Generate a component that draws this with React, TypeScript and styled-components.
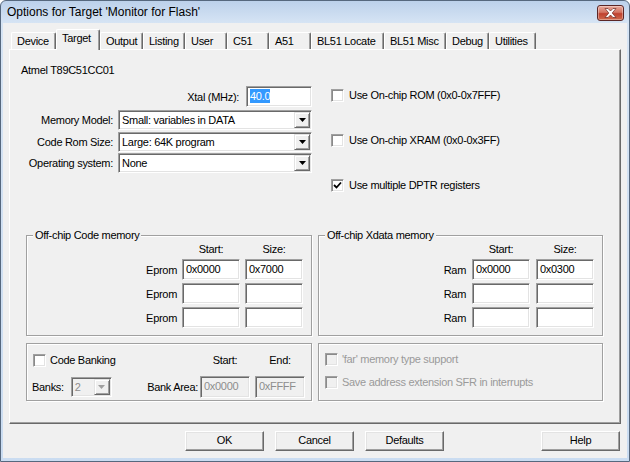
import React from "react"
import styled, { createGlobalStyle } from "styled-components"

const GlobalStyle = createGlobalStyle`
    html, body {
        margin: 0;
        padding: 0;
        background: #ffffff;
    }
    body {
        font-family: "Liberation Sans", Arial, sans-serif;
        font-size: 11px;
        letter-spacing: -0.3px;
        color: #000;
    }
    * {
        box-sizing: border-box;
    }
`

const Window = styled.div`
    width: 630px;
    height: 462px;
    display: flex;
    flex-direction: column;
    border: 1px solid #56687e;
    border-radius: 6px 6px 0 0;
    background: linear-gradient(#bcd1eb 0px, #d6e4f4 22px, #cadcf1 100%);
    padding: 0 2px 3px 2px;
`

const TitleBar = styled.div`
    height: 22px;
    display: flex;
    align-items: flex-start;
    padding-left: 4px;
`

const TitleText = styled.div`
    flex: 1;
    font-family: "Liberation Sans", Arial, sans-serif;
    font-size: 12px;
    letter-spacing: 0;
    line-height: 14px;
    padding-top: 4px;
    color: #000;
`

const CloseButton = styled.div`
    width: 27px;
    height: 16px;
    margin: 4px 3px 0 0;
    border: 1px solid #5b2626;
    border-radius: 3px;
    background: linear-gradient(#e9a99b 0%, #d37563 45%, #c0412f 55%, #cf6a4d 100%);
    box-shadow: inset 0 0 0 1px rgba(255, 255, 255, 0.35);
    display: flex;
    align-items: center;
    justify-content: center;
`

const Client = styled.div`
    flex: 1;
    display: flex;
    flex-direction: column;
    background: #f0f0f0;
    padding: 6px 6px 7px 6px;
`

const TabStrip = styled.div`
    height: 20px;
    display: flex;
    align-items: flex-end;
    padding-left: 2px;
    position: relative;
    z-index: 1;
`

const Tab = styled.div<{ $w: number; $active?: boolean }>`
    width: ${p => p.$w}px;
    height: ${p => (p.$active ? 21 : 17)}px;
    margin-bottom: ${p => (p.$active ? -1 : 0)}px;
    padding: 1px 0 0 5px;
    line-height: 14px;
    white-space: nowrap;
    background: #f0f0f0;
    border-top: 1px solid #ffffff;
    border-left: 1px solid #ffffff;
    border-right: 1px solid #696969;
    box-shadow: inset -1px 0 #a0a0a0;
    border-radius: 2px 2px 0 0;
`

const Panel = styled.div`
    height: 375px;
    border: 1px solid;
    border-color: #ffffff #696969 #696969 #ffffff;
    box-shadow: inset -1px -1px #a0a0a0;
    padding: 13px 0 0 11px;
    display: flex;
    flex-direction: column;
`

const DeviceName = styled.div`
    height: 14px;
    line-height: 14px;
`

const TopSection = styled.div`
    margin-top: 9px;
    height: 108px;
    display: flex;
`

const LeftCol = styled.div`
    width: 291px;
    display: flex;
    flex-direction: column;
`

const XtalRow = styled.div`
    display: flex;
    justify-content: flex-end;
    align-items: center;
    gap: 7px;
`

const SelectGrid = styled.div`
    margin-top: 3px;
    display: grid;
    grid-template-columns: 92px 194px;
    column-gap: 5px;
    row-gap: 1.5px;
    align-items: center;
`

const Label = styled.div`
    text-align: right;
    line-height: 14px;
    white-space: nowrap;
`

const Field = styled.div<{ $w: number; $h?: number; $disabled?: boolean }>`
    width: ${p => p.$w}px;
    height: ${p => p.$h ?? 21}px;
    background: ${p => (p.$disabled ? "#f0f0f0" : "#ffffff")};
    color: ${p => (p.$disabled ? "#8d8d8d" : "#000")};
    border: 1px solid;
    border-color: #a0a0a0 #ffffff #ffffff #a0a0a0;
    box-shadow: inset 1px 1px #696969, inset -1px -1px #e3e3e3;
    padding: 2px 0 0 3px;
    line-height: 14px;
    white-space: nowrap;
    overflow: hidden;
`

const Selected = styled.span`
    background: #3399ff;
    color: #ffffff;
    padding: 1px 0;
`

const SelectBox = styled.div<{ $w?: number; $disabled?: boolean }>`
    width: ${p => (p.$w ? `${p.$w}px` : "100%")};
    height: 20px;
    display: flex;
    align-items: stretch;
    background: ${p => (p.$disabled ? "#f0f0f0" : "#ffffff")};
    color: ${p => (p.$disabled ? "#8d8d8d" : "#000")};
    border: 1px solid;
    border-color: #a0a0a0 #ffffff #ffffff #a0a0a0;
    box-shadow: inset 1px 1px #696969, inset -1px -1px #e3e3e3;
    padding: 1px;
`

const SelectText = styled.div`
    flex: 1;
    padding: 1px 0 0 2px;
    line-height: 14px;
    white-space: nowrap;
`

const DropButton = styled.div`
    width: 16px;
    background: #f0f0f0;
    border: 1px solid;
    border-color: #e3e3e3 #696969 #696969 #e3e3e3;
    box-shadow: inset 1px 1px #ffffff, inset -1px -1px #a0a0a0;
    display: flex;
    align-items: center;
    justify-content: center;
`

const RightCol = styled.div`
    margin-left: 19px;
    display: flex;
    flex-direction: column;
    gap: 27px;
`

const CheckRow = styled.div<{ $gap?: number; $disabled?: boolean }>`
    height: 18px;
    display: flex;
    align-items: center;
    gap: ${p => p.$gap ?? 5}px;
    line-height: 14px;
    white-space: nowrap;
    color: ${p => (p.$disabled ? "#9a9a9a" : "#000")};
`

const CheckBox = styled.div<{ $disabled?: boolean }>`
    width: 13px;
    height: 13px;
    flex: none;
    background: ${p => (p.$disabled ? "#f0f0f0" : "#ffffff")};
    border: 1px solid;
    border-color: #a0a0a0 #ffffff #ffffff #a0a0a0;
    box-shadow: inset 1px 1px #8a8a8a, inset -1px -1px #e3e3e3;
    display: flex;
    align-items: center;
    justify-content: center;
`

const GroupRow = styled.div<{ $top: number }>`
    margin: ${p => p.$top}px 0 0 5px;
    display: grid;
    grid-template-columns: 286px 285px;
    column-gap: 6px;
`

const Group = styled.div<{ $h: number }>`
    position: relative;
    height: ${p => p.$h}px;
    border: 1px solid #a0a0a0;
    box-shadow: inset 1px 1px #ffffff, 1px 1px #ffffff;
`

const GroupTitle = styled.div`
    position: absolute;
    top: -8px;
    left: 6px;
    padding: 0 2px;
    background: #f0f0f0;
    line-height: 14px;
`

const MemGrid = styled.div<{ $gap: number }>`
    padding: 6px 8px 0 0;
    display: grid;
    grid-template-columns: auto 58px 58px;
    justify-content: end;
    column-gap: ${p => p.$gap}px;
    row-gap: 3px;
    align-items: center;
`

const HeadCell = styled.div<{ $w?: number }>`
    width: ${p => (p.$w ? `${p.$w}px` : "auto")};
    text-align: center;
    line-height: 14px;
`

const BankBody = styled.div`
    padding: 7px 6px 0 5px;
    display: flex;
    flex-direction: column;
    gap: 7px;
`

const BankRow = styled.div`
    display: flex;
    align-items: center;
`

const Spacer = styled.div`
    flex: 1;
`

const FarBody = styled.div`
    padding: 6px 0 0 6px;
    display: flex;
    flex-direction: column;
    gap: 5px;
`

const ButtonRow = styled.div`
    margin-top: 7px;
    display: flex;
    gap: 11px;
    padding-left: 176px;
    padding-right: 1px;
`

const Button = styled.div<{ $push?: boolean }>`
    width: 79px;
    height: 20px;
    margin-left: ${p => (p.$push ? "auto" : "0")};
    background: #f0f0f0;
    border: 1px solid;
    border-color: #ffffff #696969 #696969 #ffffff;
    box-shadow: inset -1px -1px #a0a0a0, inset 1px 1px #e3e3e3;
    text-align: center;
    line-height: 17px;
`

const tabs = [
    { name: "Device", w: 45 },
    { name: "Target", w: 44, active: true },
    { name: "Output", w: 43 },
    { name: "Listing", w: 42 },
    { name: "User", w: 42 },
    { name: "C51", w: 42 },
    { name: "A51", w: 42 },
    { name: "BL51 Locate", w: 73 },
    { name: "BL51 Misc", w: 62 },
    { name: "Debug", w: 43 },
    { name: "Utilities", w: 47 },
]

const selects = [
    { label: "Memory Model:", value: "Small: variables in DATA" },
    { label: "Code Rom Size:", value: "Large: 64K program" },
    { label: "Operating system:", value: "None" },
]

const codeRows = [["0x0000", "0x7000"], ["", ""], ["", ""]]
const xdataRows = [["0x0000", "0x0300"], ["", ""], ["", ""]]

function Arrow({ color = "#000" }: { color?: string }) {
    return (
        <svg width="7" height="4" viewBox="0 0 7 4">
            <polygon points="0,0 7,0 3.5,4" fill={color} />
        </svg>
    )
}

function Check() {
    return (
        <svg width="9" height="9" viewBox="0 0 9 9">
            <polyline points="1,4 3.5,6.5 8,1.5" fill="none" stroke="#000" strokeWidth="1.8" />
        </svg>
    )
}

function Combo({ value, w, disabled }: { value: string; w?: number; disabled?: boolean }) {
    return (
        <SelectBox $w={w} $disabled={disabled}>
            <SelectText>{value}</SelectText>
            <DropButton>
                <Arrow color={disabled ? "#a0a0a0" : "#000"} />
            </DropButton>
        </SelectBox>
    )
}

function MemGroup({ title, label, rows, gap }: { title: string; label: string; rows: string[][]; gap: number }) {
    return (
        <Group $h={101}>
            <GroupTitle>{title}</GroupTitle>
            <MemGrid $gap={gap}>
                <div />
                <HeadCell>Start:</HeadCell>
                <HeadCell>Size:</HeadCell>
                {rows.map((r, i) => (
                    <React.Fragment key={i}>
                        <Label>{label}</Label>
                        <Field $w={58}>{r[0]}</Field>
                        <Field $w={58}>{r[1]}</Field>
                    </React.Fragment>
                ))}
            </MemGrid>
        </Group>
    )
}

export default function App() {
    return (
        <>
            <GlobalStyle />
            <Window>
                <TitleBar>
                    <TitleText>Options for Target 'Monitor for Flash'</TitleText>
                    <CloseButton>
                        <svg width="13" height="10" viewBox="0 0 13 10">
                            <path
                                d="M1,0.5 L4,0.5 L6.5,3 L9,0.5 L12,0.5 L8.2,5 L12,9.5 L9,9.5 L6.5,7 L4,9.5 L1,9.5 L4.8,5 Z"
                                fill="#ffffff"
                                stroke="#6b2a22"
                                strokeWidth="0.7"
                            />
                        </svg>
                    </CloseButton>
                </TitleBar>
                <Client>
                    <TabStrip>
                        {tabs.map(t => (
                            <Tab key={t.name} $w={t.w} $active={t.active}>{t.name}</Tab>
                        ))}
                    </TabStrip>
                    <Panel>
                        <DeviceName>Atmel T89C51CC01</DeviceName>
                        <TopSection>
                            <LeftCol>
                                <XtalRow>
                                    <Label>Xtal (MHz):</Label>
                                    <Field $w={66}><Selected>40.0</Selected></Field>
                                </XtalRow>
                                <SelectGrid>
                                    {selects.map(s => (
                                        <React.Fragment key={s.label}>
                                            <Label>{s.label}</Label>
                                            <Combo value={s.value} />
                                        </React.Fragment>
                                    ))}
                                </SelectGrid>
                            </LeftCol>
                            <RightCol>
                                <CheckRow>
                                    <CheckBox />
                                    Use On-chip ROM (0x0-0x7FFF)
                                </CheckRow>
                                <CheckRow>
                                    <CheckBox />
                                    Use On-chip XRAM (0x0-0x3FF)
                                </CheckRow>
                                <CheckRow>
                                    <CheckBox><Check /></CheckBox>
                                    Use multiple DPTR registers
                                </CheckRow>
                            </RightCol>
                        </TopSection>
                        <GroupRow $top={41}>
                            <MemGroup title="Off-chip Code memory" label="Eprom" rows={codeRows} gap={5} />
                            <MemGroup title="Off-chip Xdata memory" label="Ram" rows={xdataRows} gap={6} />
                        </GroupRow>
                        <GroupRow $top={7}>
                            <Group $h={58}>
                                <BankBody>
                                    <BankRow>
                                        <CheckRow $gap={4} style={{ marginLeft: 1 }}>
                                            <CheckBox />
                                            Code Banking
                                        </CheckRow>
                                        <Spacer />
                                        <HeadCell $w={50}>Start:</HeadCell>
                                        <HeadCell $w={50} style={{ marginLeft: 5 }}>End:</HeadCell>
                                    </BankRow>
                                    <BankRow>
                                        <Label>Banks:</Label>
                                        <div style={{ marginLeft: 7 }}>
                                            <Combo value="2" w={41} disabled />
                                        </div>
                                        <Spacer />
                                        <Label style={{ marginRight: 2 }}>Bank Area:</Label>
                                        <Field $w={50} $h={22} $disabled>0x0000</Field>
                                        <Field $w={50} $h={22} $disabled style={{ marginLeft: 5 }}>0xFFFF</Field>
                                    </BankRow>
                                </BankBody>
                            </Group>
                            <Group $h={58}>
                                <FarBody>
                                    <CheckRow $gap={4} $disabled>
                                        <CheckBox $disabled />
                                        'far' memory type support
                                    </CheckRow>
                                    <CheckRow $gap={4} $disabled>
                                        <CheckBox $disabled />
                                        Save address extension SFR in interrupts
                                    </CheckRow>
                                </FarBody>
                            </Group>
                        </GroupRow>
                    </Panel>
                    <ButtonRow>
                        <Button>OK</Button>
                        <Button>Cancel</Button>
                        <Button>Defaults</Button>
                        <Button $push>Help</Button>
                    </ButtonRow>
                </Client>
            </Window>
        </>
    )
}
